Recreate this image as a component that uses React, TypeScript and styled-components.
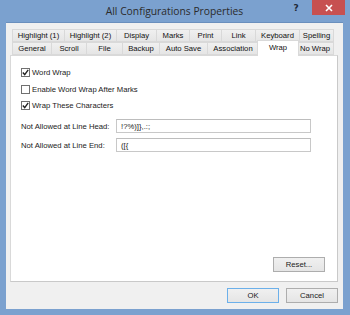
import React from "react";
import styled, { createGlobalStyle } from "styled-components";

const GlobalStyle = createGlobalStyle`
  html, body {
    margin: 0;
    padding: 0;
    background: #7399c9;
  }
  * {
    box-sizing: border-box;
  }
`;

const Frame = styled.div`
  width: 350px;
  height: 315px;
  background: #7ba1cf;
  display: flex;
  flex-direction: column;
  padding: 0 7px 6px 6px;
  font-family: "Liberation Sans", Arial, sans-serif;
  font-size: 7.7px;
  color: #1a1a1a;
`;

const TitleBar = styled.div`
  height: 22px;
  display: flex;
  align-items: flex-start;
`;

const Title = styled.div`
  flex: 1;
  text-align: center;
  font-family: "Open Sans", "Liberation Sans", sans-serif;
  font-size: 10.3px;
  color: #2b2b2b;
  padding-top: 4px;
  padding-left: 56px;
`;

const HelpButton = styled.div`
  width: 18px;
  height: 15px;
  display: flex;
  align-items: center;
  justify-content: center;
  font-family: "DejaVu Sans", sans-serif;
  font-weight: bold;
  font-size: 9px;
  color: #1f2a38;
  margin-right: 7px;
`;

const CloseButton = styled.div`
  width: 33px;
  height: 15px;
  background: #c75050;
  display: flex;
  align-items: center;
  justify-content: center;
  margin-right: -2px;
`;

const Body = styled.div`
  flex: 1;
  background: #f0f0f0;
  border-top: 1px solid #6a8fbd;
  display: flex;
  flex-direction: column;
  padding: 6px 5px 6px 4px;
`;

const TabStrip = styled.div`
  display: flex;
  flex-direction: column;
  padding-left: 2px;
  position: relative;
  z-index: 1;
`;

const TabRow = styled.div`
  display: flex;
  align-items: flex-end;
  height: 13px;
`;

const Tab = styled.div<{ $w: number; $active?: boolean; $first?: boolean }>`
  width: ${({ $w }) => $w}px;
  height: ${({ $active }) => ($active ? 16 : 13)}px;
  margin: ${({ $active }) => ($active ? "0 -2px -1px -2px" : "0")};
  background: ${({ $active }) =>
    $active ? "#ffffff" : "linear-gradient(#f0f0f0, #e5e5e5)"};
  border: 1px solid #d9d9d9;
  border-bottom-width: ${({ $active }) => ($active ? 0 : 1)}px;
  border-left-width: ${({ $first, $active }) => ($first || $active ? 1 : 0)}px;
  display: flex;
  align-items: center;
  justify-content: center;
  white-space: nowrap;
  color: #111;
  padding-bottom: ${({ $active }) => ($active ? 3 : 0)}px;
  position: relative;
  z-index: ${({ $active }) => ($active ? 2 : 0)};
`;

const Panel = styled.div`
  height: 227px;
  background: #ffffff;
  border: 1px solid #d9d9d9;
  border-right-color: #c9c9c9;
  border-bottom-color: #c9c9c9;
  display: flex;
  flex-direction: column;
  padding: 11px 12px 9px 10px;
`;

const CheckRow = styled.div`
  display: flex;
  align-items: center;
  height: 11px;
  margin-bottom: 5.7px;
  gap: 2px;
`;

const Box = styled.div`
  width: 9px;
  height: 9px;
  border: 1px solid #707070;
  background: #ffffff;
  display: flex;
  align-items: center;
  justify-content: center;
`;

const FieldRow = styled.div<{ $top?: number }>`
  display: flex;
  align-items: center;
  height: 14px;
  margin-top: ${({ $top }) => $top ?? 0}px;
  margin-bottom: 5px;
`;

const FieldLabel = styled.div`
  width: 95px;
`;

const Input = styled.div`
  width: 195px;
  height: 14px;
  border: 1px solid #c8c8c8;
  border-top-color: #bdbdbd;
  background: #fff;
  padding: 0 4px;
  display: flex;
  align-items: center;
  color: #1a1a1a;
`;

const Spacer = styled.div`
  flex: 1;
`;

const ButtonRow = styled.div`
  display: flex;
  justify-content: flex-end;
  gap: 7px;
`;

const Button = styled.div<{ $default?: boolean }>`
  width: 52px;
  height: 15px;
  border: 1px solid ${({ $default }) => ($default ? "#6cb0ea" : "#adadad")};
  background: linear-gradient(#f0f0f0, #e5e5e5);
  display: flex;
  align-items: center;
  justify-content: center;
  color: #1a1a1a;
`;

const Footer = styled(ButtonRow)`
  margin-top: 6px;
`;

const Check = () => (
  <svg width="7" height="7" viewBox="0 0 7 7">
    <path d="M0.8 3.6 L2.7 5.6 L6.2 0.9" fill="none" stroke="#222" strokeWidth="1.4" />
  </svg>
);

const CheckBox: React.FC<{ checked?: boolean; label: string }> = ({ checked, label }) => (
  <CheckRow>
    <Box>{checked && <Check />}</Box>
    <span>{label}</span>
  </CheckRow>
);

type TabDef = { label: string; w: number; active?: boolean };

const row1: TabDef[] = [
  { label: "Highlight (1)", w: 53 },
  { label: "Highlight (2)", w: 52 },
  { label: "Display", w: 40 },
  { label: "Marks", w: 33 },
  { label: "Print", w: 32 },
  { label: "Link", w: 34 },
  { label: "Keyboard", w: 44 },
  { label: "Spelling", w: 34 },
];

const row2: TabDef[] = [
  { label: "General", w: 40 },
  { label: "Scroll", w: 35 },
  { label: "File", w: 36 },
  { label: "Backup", w: 37 },
  { label: "Auto Save", w: 48 },
  { label: "Association", w: 51 },
  { label: "Wrap", w: 38, active: true },
  { label: "No Wrap", w: 37 },
];

const renderRow = (tabs: TabDef[]) =>
  tabs.map((t, i) => (
    <Tab key={t.label} $w={t.active ? t.w + 4 : t.w} $active={t.active} $first={i === 0}>
      {t.label}
    </Tab>
  ));

export default function App() {
  return (
    <>
      <GlobalStyle />
      <Frame>
        <TitleBar>
          <Title>All Configurations Properties</Title>
          <HelpButton>?</HelpButton>
          <CloseButton>
            <svg width="8" height="8" viewBox="0 0 8 8">
              <path d="M1 1 L7 7 M7 1 L1 7" stroke="#fff" strokeWidth="1.6" />
            </svg>
          </CloseButton>
        </TitleBar>
        <Body>
          <TabStrip>
            <TabRow>{renderRow(row1)}</TabRow>
            <TabRow>{renderRow(row2)}</TabRow>
          </TabStrip>
          <Panel>
            <CheckBox checked label="Word Wrap" />
            <CheckBox label="Enable Word Wrap After Marks" />
            <CheckBox checked label="Wrap These Characters" />
            <FieldRow $top={2}>
              <FieldLabel>Not Allowed at Line Head:</FieldLabel>
              <Input>{"!?%)]},.:;"}</Input>
            </FieldRow>
            <FieldRow>
              <FieldLabel>Not Allowed at Line End:</FieldLabel>
              <Input>{"([{"}</Input>
            </FieldRow>
            <Spacer />
            <ButtonRow>
              <Button>Reset...</Button>
            </ButtonRow>
          </Panel>
          <Footer>
            <Button $default>OK</Button>
            <Button>Cancel</Button>
          </Footer>
        </Body>
      </Frame>
    </>
  );
}
